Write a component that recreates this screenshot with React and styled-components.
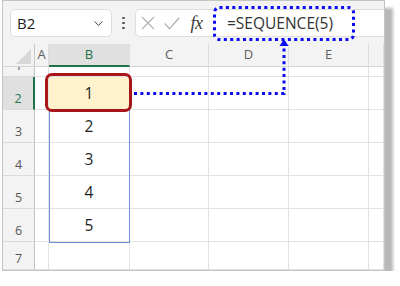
import React from 'react';
import styled, { createGlobalStyle } from 'styled-components';
import { ChevronDown } from 'lucide-react';

const Global = createGlobalStyle`
  html, body { margin: 0; padding: 0; background: #fff; }
  body { font-family: "Open Sans", "Noto Sans", sans-serif; }
`;

const Frame = styled.div`
  position: relative;
  box-sizing: border-box;
  margin-left: 2px;
  width: 383px;
  height: 271px;
  border: 1px solid #c4c4c4;
  background: #fff;
  box-shadow: 8px 8px 3px #b8b8b8;
  display: flex;
  flex-direction: column;
`;

const FormulaBar = styled.div`
  height: 43px;
  flex: none;
  box-sizing: border-box;
  background: #f3f3f3;
  display: flex;
  align-items: flex-start;
  padding: 8px 0 0 7px;
`;

const NameBox = styled.div`
  box-sizing: border-box;
  width: 102px;
  height: 28px;
  background: #fff;
  border: 1px solid #dedede;
  border-radius: 5px;
  display: flex;
  align-items: center;
  justify-content: space-between;
  padding: 0 5px 0 6px;
  font-size: 15px;
  color: #222;
`;

const Kebab = styled.div`
  width: 23px;
  height: 28px;
  display: flex;
  flex-direction: column;
  align-items: center;
  justify-content: center;
  gap: 2.5px;
  span {
    width: 2.5px;
    height: 2.5px;
    border-radius: 50%;
    background: #555;
  }
`;

const FormulaBox = styled.div`
  flex: 1;
  box-sizing: border-box;
  height: 28px;
  background: #fff;
  border: 1px solid #dedede;
  border-right: none;
  border-radius: 5px 0 0 5px;
  display: flex;
  align-items: center;
  padding-left: 4px;
`;

const IconSlot = styled.span`
  display: inline-flex;
  align-items: center;
  justify-content: center;
  width: ${p => p.$w}px;
  margin-right: ${p => p.$gap || 0}px;
`;

const Fx = styled.span`
  font-family: "Liberation Serif", "DejaVu Serif", serif;
  font-style: italic;
  font-size: 18px;
  color: #3a3a3a;
  letter-spacing: -0.5px;
  line-height: 1;
`;

const FormulaText = styled.span`
  margin-left: 22px;
  font-size: 15.5px;
  color: #333;
`;

const Grid = styled.div`
  position: relative;
  flex: 1;
  display: grid;
  grid-template-columns: 32px 14px 81px 79px 80px 80px 1fr;
  grid-template-rows: 23px 10px repeat(5, 33px) 1fr;
  overflow: hidden;
`;

const Corner = styled.div`
  position: relative;
  background: #f3f3f3;
  border-right: 1px solid #c8c8c8;
  border-bottom: 1px solid #d4d4d4;
  &::after {
    content: "";
    position: absolute;
    right: 3px;
    bottom: 2px;
    width: 15px;
    height: 15px;
    background: #d8d8d8;
    clip-path: polygon(100% 0, 100% 100%, 0 100%);
  }
`;

const ColHead = styled.div`
  box-sizing: border-box;
  background: ${p => (p.$active ? '#e0e0e0' : '#f3f3f3')};
  border-right: 1px solid #dcdcdc;
  border-bottom: ${p => (p.$active ? '2px solid #217346' : '1px solid #d4d4d4')};
  display: flex;
  align-items: center;
  justify-content: center;
  padding-bottom: 2px;
  font-size: 13px;
  color: ${p => (p.$active ? '#217346' : '#5e5e5e')};
`;

const RowHead = styled.div`
  box-sizing: border-box;
  overflow: hidden;
  background: ${p => (p.$active ? '#e0e0e0' : '#f3f3f3')};
  border-right: ${p => (p.$active ? '2px solid #217346' : '1px solid #c2c2c2')};
  border-bottom: 1px solid #dadada;
  display: flex;
  align-items: flex-end;
  justify-content: center;
  padding-bottom: 3px;
  font-size: 12.5px;
  line-height: 15px;
  color: ${p => (p.$active ? '#217346' : '#555')};
`;

const Cell = styled.div`
  box-sizing: border-box;
  position: relative;
  border-right: 1px solid #e2e2e2;
  border-bottom: 1px solid #e2e2e2;
  background: ${p => (p.$fill ? '#fff2cc' : '#fff')};
  display: flex;
  align-items: center;
  justify-content: center;
  font-size: 15.5px;
  color: #1e1e1e;
  z-index: ${p => (p.$focus ? 2 : 'auto')};
  ${p =>
    p.$focus &&
    `&::after {
      content: "";
      position: absolute;
      top: -4px;
      left: -4px;
      right: -3px;
      bottom: -3px;
      border: 3.5px solid #a8161a;
      border-radius: 7px;
    }`}
`;

const SpillRange = styled.div`
  position: absolute;
  left: 46px;
  top: 33px;
  width: 81px;
  height: 166px;
  box-sizing: border-box;
  border: 1px solid #6f8fd8;
  pointer-events: none;
`;

const Annotation = styled.svg`
  position: absolute;
  left: -3px;
  top: -1px;
  width: 400px;
  height: 286px;
  pointer-events: none;
  z-index: 3;
  overflow: visible;
`;

const cols = ['A', 'B', 'C', 'D', 'E', ''];
const rows = [1, 2, 3, 4, 5, 6, 7];
const values = { 2: 1, 3: 2, 4: 3, 5: 4, 6: 5 };

export default function App() {
  return (
    <>
      <Global />
      <Frame>
        <FormulaBar>
          <NameBox>
            <span>B2</span>
            <ChevronDown size={15} strokeWidth={1.6} color="#444" />
          </NameBox>
          <Kebab>
            <span />
            <span />
            <span />
          </Kebab>
          <FormulaBox>
            <IconSlot $w={15} $gap={8}>
              <svg width="14" height="14" viewBox="0 0 14 14">
                <path d="M1 1 L13 13 M13 1 L1 13" stroke="#b4b4b4" strokeWidth="1.3" fill="none" />
              </svg>
            </IconSlot>
            <IconSlot $w={17} $gap={8}>
              <svg width="16" height="13" viewBox="0 0 16 13">
                <path d="M0.8 6.5 L5.5 11.8 L15.3 0.8" stroke="#b4b4b4" strokeWidth="1.3" fill="none" />
              </svg>
            </IconSlot>
            <IconSlot $w={17}>
              <Fx>fx</Fx>
            </IconSlot>
            <FormulaText>=SEQUENCE(5)</FormulaText>
          </FormulaBox>
        </FormulaBar>
        <Grid>
          <Corner />
          {cols.map((c, i) => (
            <ColHead key={i} $active={c === 'B'}>
              {c}
            </ColHead>
          ))}
          {rows.map(r => (
            <React.Fragment key={r}>
              <RowHead $active={r === 2}>{r}</RowHead>
              {cols.map((c, i) => (
                <Cell key={i} $fill={c === 'B' && r === 2} $focus={c === 'B' && r === 2}>
                  {c === 'B' && values[r] !== undefined ? values[r] : ''}
                </Cell>
              ))}
            </React.Fragment>
          ))}
          <SpillRange />
        </Grid>
        <Annotation viewBox="0 0 400 286">
          <rect
            x="214.5"
            y="7.5"
            width="139"
            height="32"
            rx="5"
            fill="none"
            stroke="#0b0bf2"
            strokeWidth="3"
            strokeDasharray="3 3.4"
          />
          <path
            d="M134 93.5 H284 V47"
            fill="none"
            stroke="#0b0bf2"
            strokeWidth="3"
            strokeDasharray="3 3.4"
          />
          <polygon points="284,39 279.5,46 288.5,46" fill="#0b0bf2" />
        </Annotation>
      </Frame>
    </>
  );
}
